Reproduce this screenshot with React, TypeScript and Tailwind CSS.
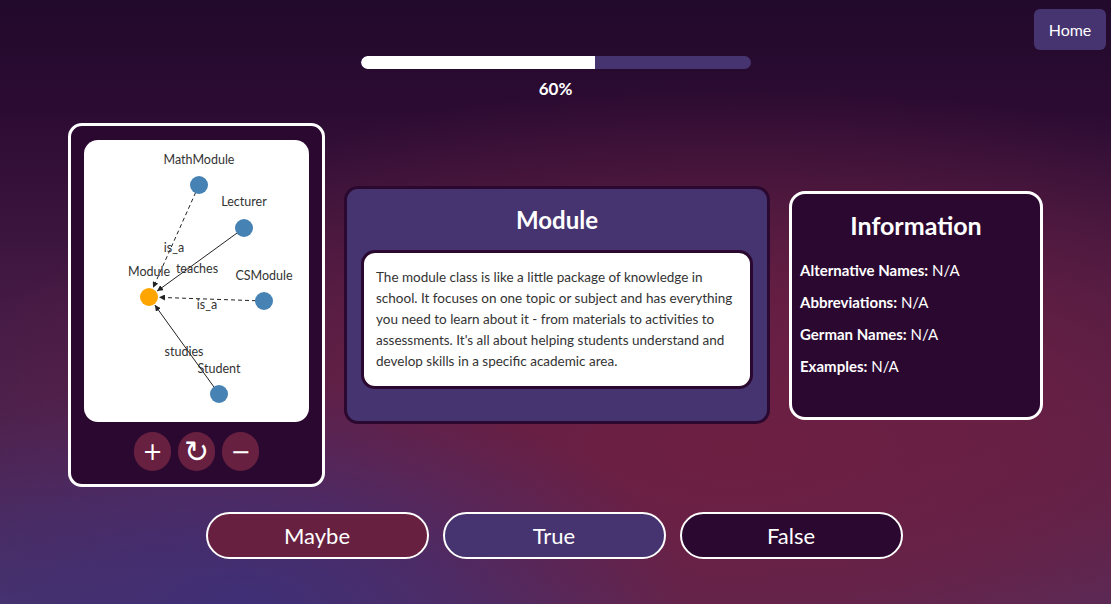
import React from "react";

const font = { fontFamily: "Lato, 'Noto Sans', sans-serif" };

type Node = { id: string; x: number; y: number; color: string; ly: number };

const nodes: Node[] = [
  { id: "MathModule", x: 115, y: 45, color: "#4682b4", ly: 21 },
  { id: "Lecturer", x: 160, y: 88, color: "#4682b4", ly: 63 },
  { id: "CSModule", x: 180, y: 161, color: "#4682b4", ly: 137 },
  { id: "Student", x: 135, y: 254, color: "#4682b4", ly: 230 },
  { id: "Module", x: 65, y: 157, color: "#ffa500", ly: 133 },
];

const edges = [
  { from: "MathModule", label: "is_a", dashed: true, lx: 90, ly: 109 },
  { from: "Lecturer", label: "teaches", dashed: false, lx: 113, ly: 130 },
  { from: "CSModule", label: "is_a", dashed: true, lx: 123, ly: 166 },
  { from: "Student", label: "studies", dashed: false, lx: 100, ly: 213 },
];

function Graph() {
  const target = nodes[4];
  return (
    <svg viewBox="0 0 224 282" width="224" height="282" className="block">
      <defs>
        <marker id="arr" viewBox="0 0 10 10" refX="10" refY="5" markerWidth="6" markerHeight="6" orient="auto">
          <path d="M0,0 L10,5 L0,10 z" fill="#222" />
        </marker>
      </defs>
      {edges.map((e) => {
        const s = nodes.find((n) => n.id === e.from)!;
        const dx = target.x - s.x;
        const dy = target.y - s.y;
        const len = Math.sqrt(dx * dx + dy * dy);
        // stop the arrow at the edge of the target circle
        const x2 = target.x - (dx / len) * 10;
        const y2 = target.y - (dy / len) * 10;
        const x1 = s.x + (dx / len) * 8;
        const y1 = s.y + (dy / len) * 8;
        return (
          <line
            key={e.from}
            x1={x1}
            y1={y1}
            x2={x2}
            y2={y2}
            stroke="#222"
            strokeWidth="1"
            strokeDasharray={e.dashed ? "4 3" : undefined}
            markerEnd="url(#arr)"
          />
        );
      })}
      {nodes.map((n) => (
        <circle key={n.id} cx={n.x} cy={n.y} r="9" fill={n.color} />
      ))}
      {nodes.map((n) => (
        <text key={n.id + "l"} x={n.x} y={n.ly} textAnchor="middle" dominantBaseline="middle" fontSize="12.5" fill="#333" style={font}>
          {n.id}
        </text>
      ))}
      {edges.map((e) => (
        <text key={e.from + "t"} x={e.lx} y={e.ly} textAnchor="middle" dominantBaseline="middle" fontSize="12.5" fill="#333" style={font}>
          {e.label}
        </text>
      ))}
    </svg>
  );
}

function CircleBtn({ children }: { children: React.ReactNode }) {
  return (
    <button className="w-[37px] h-[39px] rounded-full bg-[#672040] text-white flex items-center justify-center font-['DejaVu_Sans',sans-serif] leading-none">
      {children}
    </button>
  );
}

export default function App() {
  return (
    <div
      style={font}
      className="relative w-[1111px] h-[604px] overflow-hidden bg-[radial-gradient(ellipse_40%_38%_at_22%_100%,#3f2f76_0%,rgba(63,47,118,0.6)_45%,rgba(63,47,118,0)_100%),radial-gradient(ellipse_72%_60%_at_66%_74%,#6d1f42_0%,rgba(109,31,66,0.8)_42%,rgba(109,31,66,0)_100%),linear-gradient(to_bottom,#220a2c_0%,#2c0b32_18%,#441a44_50%,#4d2552_78%,#4a3468_100%)] text-white"
    >
      <button className="absolute top-[9px] right-[5px] w-[72px] h-[41px] rounded-md bg-[#463470] text-[16px] text-white">
        Home
      </button>

      <div className="flex flex-col items-center pt-[56px]">
        <div className="w-[390px] h-[13px] rounded-full bg-[#463470] overflow-hidden">
          <div className="w-[60%] h-full bg-white rounded-l-full" />
        </div>
        <div className="mt-[10px] text-[17px] font-bold leading-[20px]">60%</div>
      </div>

      <div className="flex items-center pl-[68px] mt-[24px] gap-[19px]">
        <div className="w-[257px] h-[364px] rounded-[14px] border-[3px] border-white bg-[#2b0830] pt-[14px] px-[13px] flex flex-col items-center">
          <div className="w-[225px] h-[282px] rounded-[14px] bg-white overflow-hidden">
            <Graph />
          </div>
          <div className="flex gap-[7px] mt-[10px]">
            <CircleBtn>
              <span className="text-[24px]">+</span>
            </CircleBtn>
            <CircleBtn>
              <span className="text-[30px]">↻</span>
            </CircleBtn>
            <CircleBtn>
              <span className="text-[24px]">−</span>
            </CircleBtn>
          </div>
        </div>

        <div className="w-[426px] h-[238px] rounded-[14px] border-[3px] border-[#2b0830] bg-[#463470] px-[14px] pt-[16px]">
          <h2 className="text-center text-[24px] font-bold leading-[30px]">Module</h2>
          <div className="mt-[15px] rounded-[14px] border-[3px] border-[#2b0830] bg-white px-[12px] py-[14px] text-[13.5px] leading-[21px] text-[#333]">
            The module class is like a little package of knowledge in school. It focuses on one topic or subject and has everything you need to learn about it - from materials to activities to assessments. It's all about helping students understand and develop skills in a specific academic area.
          </div>
        </div>

        <div className="w-[254px] h-[229px] rounded-[16px] border-[3px] border-white bg-[#2b0830] px-[8px] pt-[14px]">
          <h2 className="text-center text-[25px] font-bold leading-[34px]">Information</h2>
          <div className="mt-[18px] flex flex-col gap-[11px] text-[15px] leading-[21px]">
            <p><span className="font-bold">Alternative Names:</span> N/A</p>
            <p><span className="font-bold">Abbreviations:</span> N/A</p>
            <p><span className="font-bold">German Names:</span> N/A</p>
            <p><span className="font-bold">Examples:</span> N/A</p>
          </div>
        </div>
      </div>

      <div className="flex justify-center gap-[14px] mt-[25px] pr-[3px]">
        <button className="w-[223px] h-[47px] rounded-full border-2 border-white bg-[#672040] text-[22px]">Maybe</button>
        <button className="w-[223px] h-[47px] rounded-full border-2 border-white bg-[#463470] text-[22px]">True</button>
        <button className="w-[223px] h-[47px] rounded-full border-2 border-white bg-[#2b0830] text-[22px]">False</button>
      </div>
    </div>
  );
}
